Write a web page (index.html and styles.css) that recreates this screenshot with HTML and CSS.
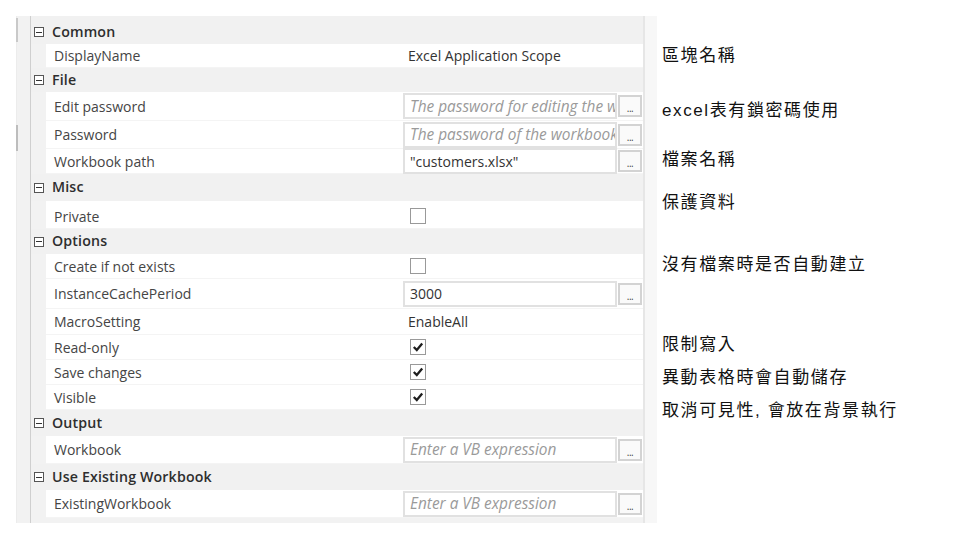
FILE: index.html
```html
<!DOCTYPE html>
<html lang="zh-Hant">
<head>
<meta charset="utf-8">
<title>Excel Application Scope properties</title>
<link rel="stylesheet" href="styles.css">
</head>
<body>
<div class="page">
  <div class="panel">
    <div class="gutter"><span class="mark mark-top"></span><span class="mark mark-mid"></span></div>
    <div class="grid">
      <div class="row cat h28 first"><span class="toggle"></span><span class="cat-name">Common</span></div>
      <div class="row prop h24"><div class="name">DisplayName</div><div class="value">Excel Application Scope</div></div>
      <div class="row cat h24"><span class="toggle"></span><span class="cat-name">File</span></div>
      <div class="row prop h29"><div class="name">Edit password</div><div class="value"><div class="field"><span class="box ph">The password for editing the workbook</span><span class="btn">...</span></div></div></div>
      <div class="row prop h28"><div class="name">Password</div><div class="value"><div class="field"><span class="box ph">The password of the workbook</span><span class="btn">...</span></div></div></div>
      <div class="row prop h25"><div class="name">Workbook path</div><div class="value"><div class="field"><span class="box">"customers.xlsx"</span><span class="btn">...</span></div></div></div>
      <div class="row cat h27"><span class="toggle"></span><span class="cat-name">Misc</span></div>
      <div class="row prop h28 low"><div class="name">Private</div><div class="value"><span class="check"></span></div></div>
      <div class="row cat h25"><span class="toggle"></span><span class="cat-name">Options</span></div>
      <div class="row prop h25"><div class="name">Create if not exists</div><div class="value"><span class="check"></span></div></div>
      <div class="row prop h30"><div class="name">InstanceCachePeriod</div><div class="value"><div class="field"><span class="box">3000</span><span class="btn">...</span></div></div></div>
      <div class="row prop h26"><div class="name">MacroSetting</div><div class="value">EnableAll</div></div>
      <div class="row prop h25"><div class="name">Read-only</div><div class="value"><span class="check on"><svg viewBox="0 0 14 14"><path d="M2.8 7 L5.8 10 L11.2 3.6"/></svg></span></div></div>
      <div class="row prop h25"><div class="name">Save changes</div><div class="value"><span class="check on"><svg viewBox="0 0 14 14"><path d="M2.8 7 L5.8 10 L11.2 3.6"/></svg></span></div></div>
      <div class="row prop h25"><div class="name">Visible</div><div class="value"><span class="check on"><svg viewBox="0 0 14 14"><path d="M2.8 7 L5.8 10 L11.2 3.6"/></svg></span></div></div>
      <div class="row cat h26"><span class="toggle"></span><span class="cat-name">Output</span></div>
      <div class="row prop h28"><div class="name">Workbook</div><div class="value"><div class="field"><span class="box ph">Enter a VB expression</span><span class="btn">...</span></div></div></div>
      <div class="row cat h26"><span class="toggle"></span><span class="cat-name">Use Existing Workbook</span></div>
      <div class="row prop h28"><div class="name">ExistingWorkbook</div><div class="value"><div class="field"><span class="box ph">Enter a VB expression</span><span class="btn">...</span></div></div></div>
    </div>
    <div class="scroll"></div>
  </div>
  <div class="notes">
    <p class="note n1">區塊名稱</p>
    <p class="note n2">excel表有鎖密碼使用</p>
    <p class="note n3">檔案名稱</p>
    <p class="note n4">保護資料</p>
    <p class="note n5">沒有檔案時是否自動建立</p>
    <p class="note n6">限制寫入</p>
    <p class="note n7">異動表格時會自動儲存</p>
    <p class="note n8">取消可見性, 會放在背景執行</p>
  </div>
</div>
</body>
</html>
```
FILE: styles.css
```css
* { box-sizing: border-box; }
html, body { margin: 0; padding: 0; background: #ffffff; }
body { width: 960px; height: 540px; overflow: hidden; }

.page {
  display: flex;
  align-items: flex-start;
  padding-top: 16px;
  padding-left: 16px;
}

.panel {
  display: flex;
  height: 507px;
  font-family: "Open Sans", "Noto Sans", sans-serif;
  font-size: 14px;
  color: #3f3f3f;
}

.gutter {
  width: 15px;
  background: #f2f2f2;
  border-left: 1px solid #ececec;
  border-right: 1px solid #cfcfcf;
  display: flex;
  flex-direction: column;
}
.mark {
  display: block;
  width: 2px;
  margin-left: -1px;
  background: #c9c9c9;
}
.mark-top { height: 24px; margin-top: 2px; }
.mark-mid { height: 26px; margin-top: 83px; background: #bdbdbd; }

.grid {
  width: 612px;
  display: flex;
  flex-direction: column;
  background: #f2f2f2;
}

.row { display: flex; align-items: center; flex: none; }
.h24 { height: 24px; }
.h25 { height: 25px; }
.h26 { height: 26px; }
.h27 { height: 27px; }
.h28 { height: 28px; }
.h29 { height: 29px; }
.h30 { height: 30px; }
.first { padding-top: 4px; }
.low { padding-top: 3px; }

.cat {
  background: #f1f1f1;
  padding-left: 3px;
  font-weight: 600;
  font-size: 14.2px;
  letter-spacing: 0.15px;
  color: #2e2e2e;
}
.toggle {
  width: 10px;
  height: 10px;
  border: 1px solid #555;
  display: flex;
  align-items: center;
  justify-content: center;
  margin-right: 8px;
  background: #fff;
}
.toggle::before {
  content: "";
  width: 6px;
  height: 1px;
  background: #333;
}
.cat-name { line-height: 1; }

.prop {
  margin-left: 15px;
  background: #ffffff;
  border-bottom: 1px solid #f4f4f4;
}
.name {
  width: 357px;
  padding-left: 8px;
  color: #454545;
  white-space: nowrap;
}
.value {
  width: 240px;
  padding-left: 5px;
  color: #333;
  white-space: nowrap;
  display: flex;
  align-items: center;
}
.field {
  display: flex;
  align-items: center;
  margin-left: -5px;
}
.box {
  width: 214px;
  height: 26px;
  border: 2px solid #e1e1e1;
  padding: 0 5px;
  display: flex;
  align-items: center;
  overflow: hidden;
  white-space: nowrap;
  background: #fff;
  color: #333;
}
.box.ph { font-style: italic; font-size: 15.4px; color: #9a9a9a; }
.btn {
  width: 24px;
  height: 22px;
  margin-left: 1px;
  border: 2px solid #d3d3d3;
  background: #fafafa;
  font-size: 10px;
  color: #444;
  display: flex;
  align-items: flex-end;
  justify-content: center;
  line-height: 13px;
  letter-spacing: -0.5px;
}
.check {
  width: 16px;
  height: 16px;
  border: 1px solid #999;
  background: #fff;
  margin-left: 2px;
  display: flex;
  align-items: center;
  justify-content: center;
}
.check svg { width: 14px; height: 14px; }
.check path { fill: none; stroke: #1e1e1e; stroke-width: 2.3; }

.scroll {
  width: 14px;
  border-left: 2px solid #e6e6e6;
  background: #f7f7f7;
}

.notes {
  padding-left: 5px;
  display: flex;
  flex-direction: column;
  font-family: "Liberation Sans", "Noto Sans CJK TC", sans-serif;
  font-size: 17px;
  letter-spacing: 1.6px;
  color: #111;
}
.note { margin: 0; height: 20px; line-height: 20px; white-space: nowrap; }
.n1 { margin-top: 30px; }
.n2 { margin-top: 35px; }
.n3 { margin-top: 29px; }
.n4 { margin-top: 23px; }
.n5 { margin-top: 42px; }
.n6 { margin-top: 60px; }
.n7 { margin-top: 13px; }
.n8 { margin-top: 13px; }
```
